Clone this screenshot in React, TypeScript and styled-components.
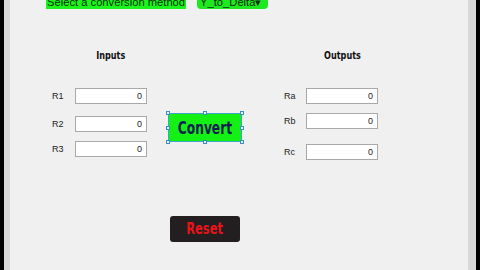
import React from 'react';
import styled, { createGlobalStyle } from 'styled-components';

const GlobalStyle = createGlobalStyle`
  html, body {
    margin: 0;
    padding: 0;
    background: #000;
  }
  body {
    font-family: 'Liberation Sans', Arial, sans-serif;
  }
`;

const condensed = `'DejaVu Sans Condensed', 'Liberation Sans', sans-serif`;

const Screen = styled.div`
  width: 480px;
  height: 270px;
  background: #000;
  padding: 0 4px;
  box-sizing: border-box;
  overflow: hidden;
  display: flex;
`;

const Window = styled.div`
  flex: 1;
  background: #f0f0f0;
  border-left: 6px solid #d8d8d8;
  border-right: 8px solid #d8d8d8;
  display: flex;
  flex-direction: column;
`;

const TopBar = styled.div`
  height: 9px;
  overflow: hidden;
  display: flex;
  align-items: flex-end;
  padding-left: 36px;
  gap: 11px;
`;

const MethodLabel = styled.span`
  background: #1cf51c;
  color: #0e2e0e;
  font-size: 11.2px;
  line-height: 14px;
  padding: 0 1px;
  white-space: nowrap;
`;

const MethodSelect = styled.span`
  background: #1ee81e;
  color: #0e2e0e;
  font-size: 11.2px;
  line-height: 14px;
  padding: 0 1px 0 3px;
  border-radius: 0 0 4px 4px;
  width: 71px;
  box-sizing: border-box;
  white-space: nowrap;
`;

const Body = styled.div`
  display: flex;
  align-items: flex-start;
  padding: 40px 0 0 42px;
`;

const Group = styled.div<{ $labelWidth: number }>`
  display: grid;
  grid-template-columns: ${(p) => p.$labelWidth}px 72px;
  align-items: center;
`;

const Heading = styled.div`
  grid-column: 2;
  height: 14px;
  display: flex;
  justify-content: center;
  align-items: center;
`;

const Squeezed = styled.span<{ $size: number; $scale: number }>`
  display: block;
  font-family: ${condensed};
  font-weight: bold;
  font-size: ${(p) => p.$size}px;
  line-height: 14px;
  transform: scaleX(${(p) => p.$scale});
`;

const HeadingText = styled(Squeezed)`
  color: #111;
`;

const FieldLabel = styled.div<{ $gap: number }>`
  margin-top: ${(p) => p.$gap}px;
  font-size: 9px;
  color: #222;
`;

const FieldBox = styled.div<{ $gap: number }>`
  margin-top: ${(p) => p.$gap}px;
  height: 16px;
  box-sizing: border-box;
  background: #fff;
  border: 1px solid #a9a9a9;
  font-size: 9px;
  line-height: 14px;
  text-align: right;
  padding-right: 4px;
  color: #222;
`;

const Center = styled.div`
  display: flex;
  flex-direction: column;
  align-items: flex-start;
  margin: 0 42px 0 21px;
`;

const ConvertWrap = styled.div`
  position: relative;
  margin-top: 64px;
`;

const ConvertButton = styled.button`
  width: 74px;
  height: 29px;
  background: #14f014;
  border: 1px solid #3aa6c8;
  color: #0c1d52;
  padding: 0;
  display: flex;
  justify-content: center;
  align-items: center;
  cursor: pointer;
`;

const Handle = styled.span<{ $x: number; $y: number }>`
  position: absolute;
  left: ${(p) => p.$x}%;
  top: ${(p) => p.$y}%;
  width: 4px;
  height: 4px;
  margin: -2px 0 0 -2px;
  background: #e8f4fa;
  border: 1px solid #3a8fc0;
  box-sizing: border-box;
`;

const ResetButton = styled.button`
  margin: 74px 0 0 2px;
  width: 70px;
  height: 26px;
  background: #231f20;
  border: none;
  border-radius: 3px;
  color: #e8141a;
  padding: 0;
  display: flex;
  justify-content: center;
  align-items: center;
  cursor: pointer;
`;

const inputs = [
  { name: 'R1', gap: 25 },
  { name: 'R2', gap: 12 },
  { name: 'R3', gap: 9 },
];

const outputs = [
  { name: 'Ra', gap: 25 },
  { name: 'Rb', gap: 9 },
  { name: 'Rc', gap: 15 },
];

const handles = [
  [0, 0], [50, 0], [100, 0],
  [0, 50], [100, 50],
  [0, 100], [50, 100], [100, 100],
];

export default function App() {
  return (
    <>
      <GlobalStyle />
      <Screen>
        <Window>
          <TopBar>
            <MethodLabel>Select a conversion method</MethodLabel>
            <MethodSelect>Y_to_Delta▾</MethodSelect>
          </TopBar>
          <Body>
            <Group $labelWidth={23}>
              <Heading>
                <HeadingText $size={11} $scale={0.82}>Inputs</HeadingText>
              </Heading>
              {inputs.map((f) => (
                <React.Fragment key={f.name}>
                  <FieldLabel $gap={f.gap}>{f.name}</FieldLabel>
                  <FieldBox $gap={f.gap}>0</FieldBox>
                </React.Fragment>
              ))}
            </Group>
            <Center>
              <ConvertWrap>
                <ConvertButton>
                  <Squeezed $size={17} $scale={0.8}>Convert</Squeezed>
                </ConvertButton>
                {handles.map(([x, y]) => (
                  <Handle key={`${x}-${y}`} $x={x} $y={y} />
                ))}
              </ConvertWrap>
              <ResetButton>
                <Squeezed $size={15} $scale={0.85}>Reset</Squeezed>
              </ResetButton>
            </Center>
            <Group $labelWidth={22}>
              <Heading>
                <HeadingText $size={11} $scale={0.82}>Outputs</HeadingText>
              </Heading>
              {outputs.map((f) => (
                <React.Fragment key={f.name}>
                  <FieldLabel $gap={f.gap}>{f.name}</FieldLabel>
                  <FieldBox $gap={f.gap}>0</FieldBox>
                </React.Fragment>
              ))}
            </Group>
          </Body>
        </Window>
      </Screen>
    </>
  );
}
